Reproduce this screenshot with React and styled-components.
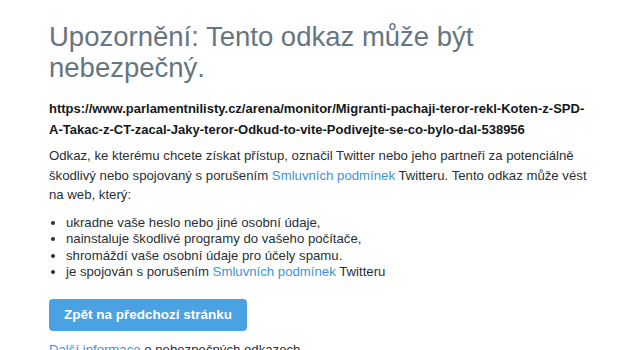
import React from 'react'
import styled, { createGlobalStyle } from 'styled-components'

const GlobalStyle = createGlobalStyle`
  body {
    margin: 0;
    background: #ffffff;
    font-family: "Liberation Sans", Arial, sans-serif;
  }
`

export const Page = styled.div`
  width: 630px;
  height: 350px;
  overflow: hidden;
  background: #fff;
`

export const Content = styled.div`
  width: 542px;
  padding: 21px 0 0 49px;
`

export const Title = styled.h1`
  margin: 0;
  font-size: 27.5px;
  font-weight: normal;
  line-height: 31px;
  color: #66757f;
`

export const Url = styled.div`
  margin-top: 15px;
  font-size: 13px;
  font-weight: bold;
  line-height: 21px;
  color: #14171a;
  word-break: break-word;
`

export const Text = styled.p`
  margin: 6px 0 0;
  font-size: 13.2px;
  line-height: 19.5px;
  color: #292f33;
`

export const Link = styled.a`
  color: #3b94d9;
  text-decoration: none;
`

export const List = styled.ul`
  margin: 10px 0 0;
  padding-left: 17px;
  font-size: 13.2px;
  line-height: 16.6px;
  color: #292f33;
`

export const Item = styled.li``

export const Button = styled.button`
  margin-top: 18px;
  height: 32px;
  padding: 0 15px;
  border: none;
  border-radius: 4px;
  background: #4aa1e3;
  color: #fff;
  font-family: inherit;
  font-size: 13.5px;
  font-weight: bold;
`

export const More = styled.p`
  margin: 11px 0 0;
  font-size: 13.2px;
  color: #292f33;
`

function App() {
  return (
    <Page>
      <GlobalStyle />
      <Content>
        <Title>Upozornění: Tento odkaz může být nebezpečný.</Title>
        <Url>https://www.parlamentnilisty.cz/arena/monitor/Migranti-pachaji-teror-rekl-Koten-z-SPD-A-Takac-z-CT-zacal-Jaky-teror-Odkud-to-vite-Podivejte-se-co-bylo-dal-538956</Url>
        <Text>
          Odkaz, ke kterému chcete získat přístup, označil Twitter nebo jeho partneři za potenciálně
          škodlivý nebo spojovaný s porušením <Link href="#">Smluvních podmínek</Link> Twitteru. Tento odkaz může vést
          na web, který:
        </Text>
        <List>
          <Item>ukradne vaše heslo nebo jiné osobní údaje,</Item>
          <Item>nainstaluje škodlivé programy do vašeho počítače,</Item>
          <Item>shromáždí vaše osobní údaje pro účely spamu.</Item>
          <Item>je spojován s porušením <Link href="#">Smluvních podmínek</Link> Twitteru</Item>
        </List>
        <Button>Zpět na předchozí stránku</Button>
        <More><Link href="#">Další informace</Link> o nebezpečných odkazech</More>
      </Content>
    </Page>
  )
}

export default App
